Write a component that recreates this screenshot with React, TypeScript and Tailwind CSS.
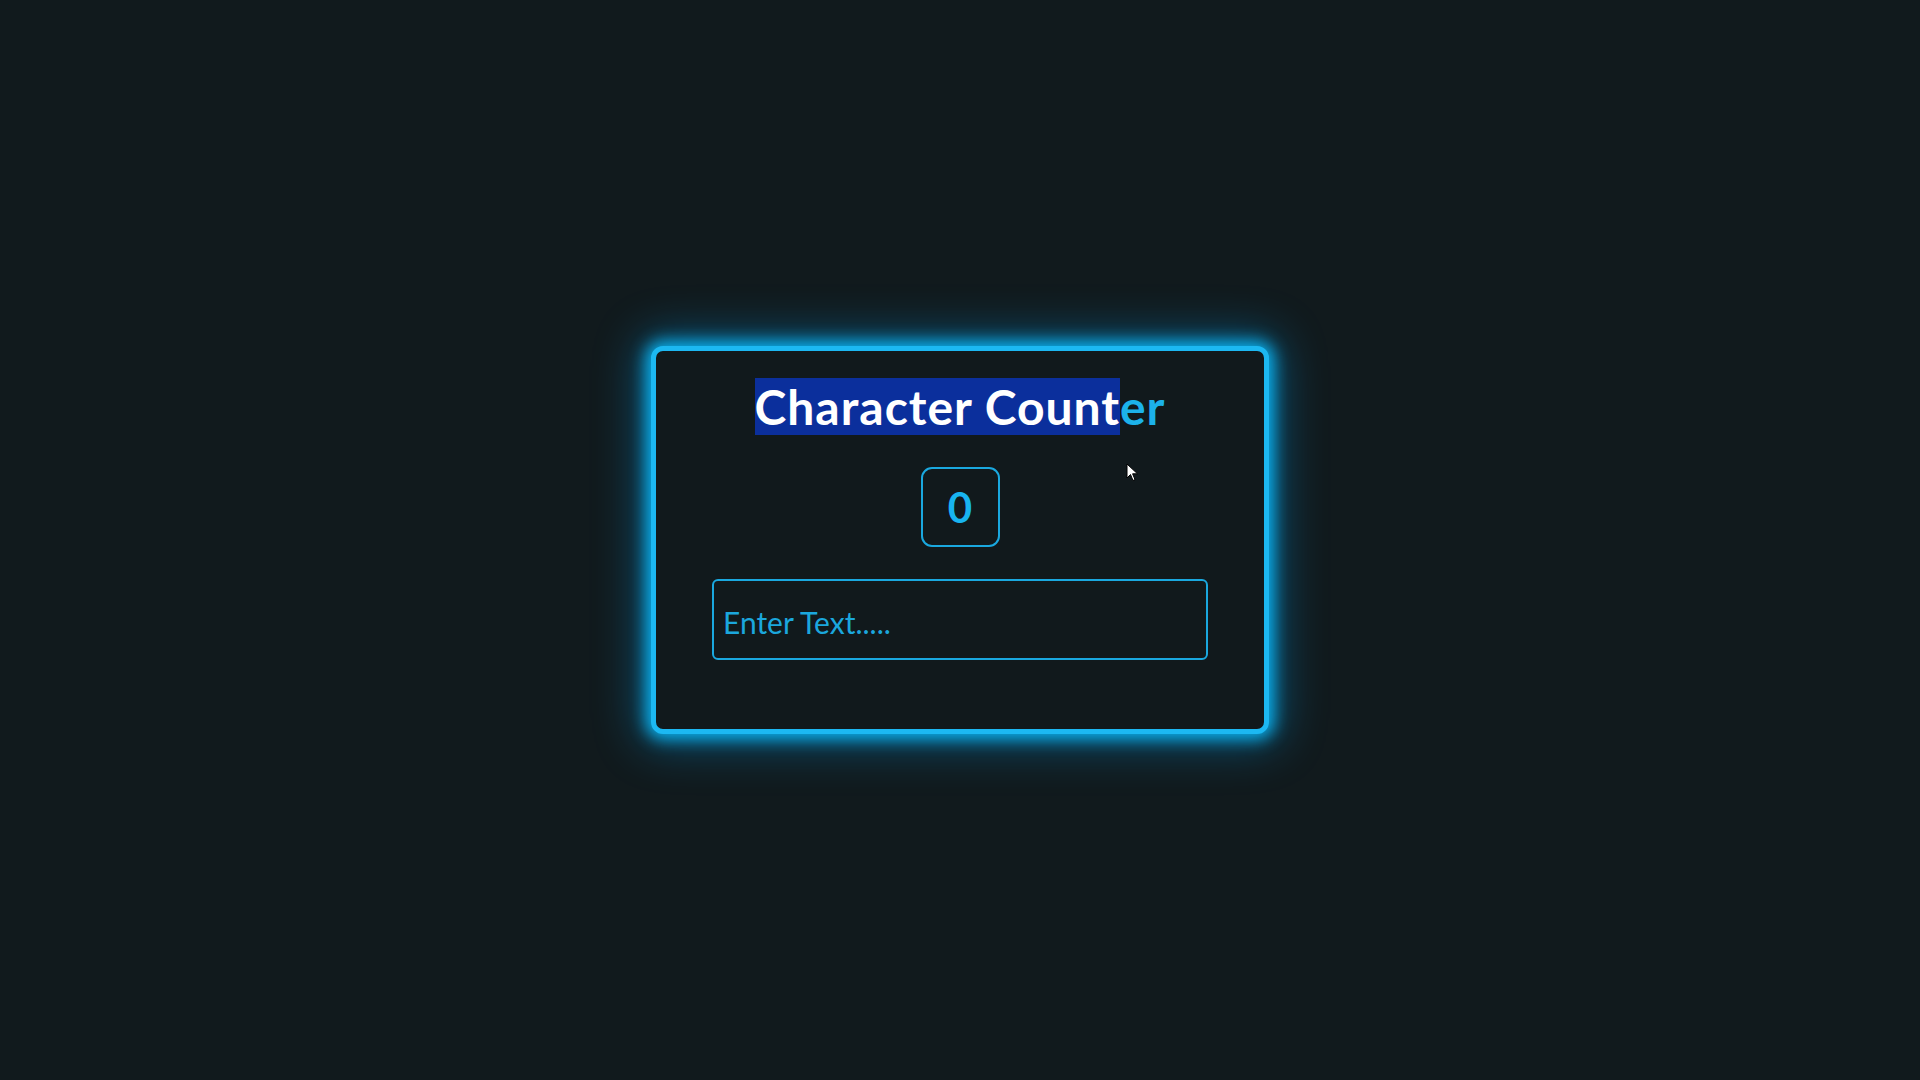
import React from "react";

function Pointer() {
  return (
    <svg width="14" height="20" viewBox="0 0 14 20" className="absolute left-[470px] top-[112px]">
      <path d="M1 1 L1 15 L4.5 11.5 L7 17.5 L9 16.6 L6.6 10.8 L11.5 10.8 Z" fill="#ffffff" stroke="#000000" strokeWidth="1" strokeLinejoin="round" />
    </svg>
  );
}

export default function App() {
  const [text, setText] = React.useState("");

  return (
    <div
      className="min-h-screen w-full flex items-center justify-center bg-[#111a1d]"
      style={{ fontFamily: "Lato, 'Noto Sans', sans-serif" }}
    >
      <div className="relative w-[618px] h-[388px] flex flex-col items-center pt-[27px] rounded-[12px] border-[5px] border-[#1cb8f2] bg-[#11191c] shadow-[0_0_16px_5px_rgba(10,190,255,0.9),0_0_45px_12px_rgba(0,160,240,0.4)]">
        <h1 className="text-[48px] font-bold leading-[58px] tracking-[1px] text-[#1cb2ea]">
          <span className="bg-[#0b2f9c] text-white">Character Count</span>
          <span>er</span>
        </h1>

        <div className="mt-[31px] w-[79px] h-[80px] flex items-center justify-center rounded-[11px] border-2 border-[#1aa8df]">
          <span className="text-[42px] font-bold text-[#18b4f0] leading-none">{text.length}</span>
        </div>

        <input
          value={text}
          onChange={(e) => setText(e.target.value)}
          placeholder="Enter Text....."
          className="mt-[32px] w-[496px] h-[81px] px-[9px] pt-[4px] rounded-[6px] border-2 border-[#1aa8df] bg-transparent text-[30px] text-[#1ba7dd] placeholder:text-[#1ba7dd] outline-none"
        />

        <Pointer />
      </div>
    </div>
  );
}
